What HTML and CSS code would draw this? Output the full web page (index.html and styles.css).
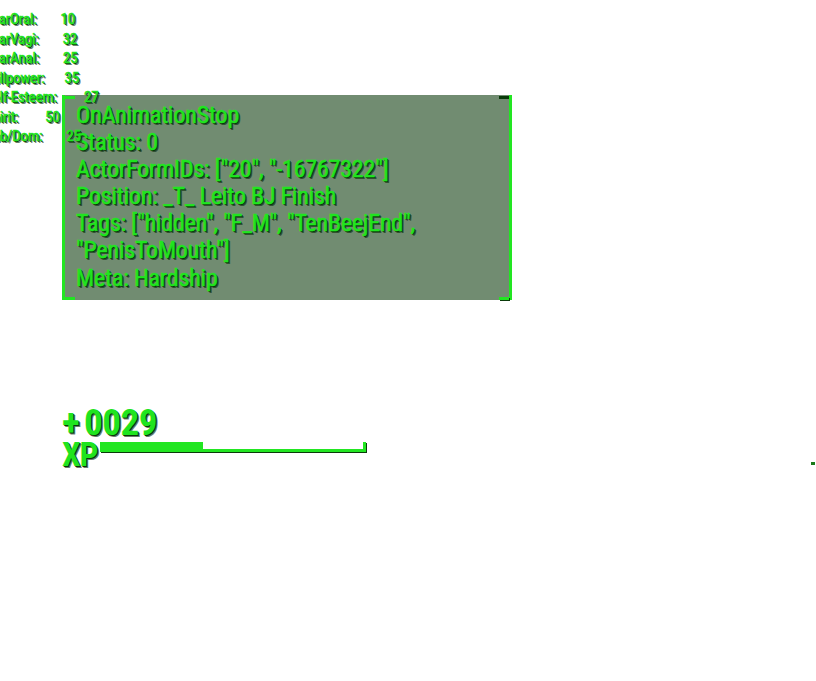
FILE: index.html
```html
<!DOCTYPE html>
<html>
<head>
<meta charset="utf-8">
<link rel="stylesheet" href="styles.css">
</head>
<body>
<div class="hud">
  <div class="event">
    <span class="tick tl"></span><span class="tick bl"></span>
    <span class="tick tr"></span><span class="tick br"></span>
    <div class="line">OnAnimationStop</div>
    <div class="line">Status: 0</div>
    <div class="line">ActorFormIDs: ["20", "-16767322"]</div>
    <div class="line">Position: _T_ Leito BJ Finish</div>
    <div class="line">Tags: ["hidden", "F_M", "TenBeejEnd",</div>
    <div class="line">"PenisToMouth"]</div>
    <div class="line">Meta: Hardship</div>
  </div>

  <div class="stats">
    <div class="row"><span class="lbl">FearOral:</span><span class="val">10</span></div>
    <div class="row"><span class="lbl">FearVagi:</span><span class="val">32</span></div>
    <div class="row"><span class="lbl">FearAnal:</span><span class="val">25</span></div>
    <div class="row narrow"><span class="lbl">Willpower:</span><span class="val">35</span></div>
    <div class="row wide"><span class="lbl">Self-Esteem:</span><span class="val">27</span></div>
    <div class="row wide"><span class="lbl">Spirit:</span><span class="val">50</span></div>
    <div class="row"><span class="lbl">Sub/Dom:</span><span class="val">25</span></div>
  </div>

  <div class="xp">
    <div class="gain"><span class="plus">+</span>0029</div>
    <div class="xprow">
      <span class="xplabel">XP</span>
      <div class="bar"><div class="fill" style="width:103px"></div></div>
    </div>
  </div>

  <span class="dot"></span>
</div>
</body>
</html>
```
FILE: styles.css
```css
html, body {
  margin: 0;
  padding: 0;
  background: #ffffff;
}
.hud {
  position: relative;
  width: 816px;
  height: 681px;
  overflow: hidden;
  font-family: "Roboto Condensed", "Liberation Sans Narrow", "DejaVu Sans Condensed", "Roboto", sans-serif;
  color: #1fe41f;
  text-shadow: 1px 1px 0 #0a360a, 2px 2px 0 rgba(8, 40, 8, 0.6);
}
.stats {
  position: absolute;
  left: -15px;
  top: 10px;
  font-size: 15px;
  font-weight: normal;
  letter-spacing: -0.2px;
  -webkit-text-stroke: 0.6px #1fe41f;
}
.stats .row {
  display: flex;
  gap: 24px;
  height: 19.5px;
  line-height: 19.5px;
}
.stats .row.narrow {
  gap: 20px;
}
.stats .row.wide {
  gap: 27px;
}
.event {
  position: absolute;
  left: 62px;
  top: 95px;
  width: 450px;
  height: 205px;
  box-sizing: border-box;
  padding: 7px 0 0 11px;
  background: #718c71;
  border-left: 3px solid #22e622;
  border-right: 3px solid #22e622;
  font-size: 24px;
  font-weight: normal;
  line-height: 27.1px;
  letter-spacing: -0.2px;
  -webkit-text-stroke: 0.5px #1fe41f;
}
.tick {
  position: absolute;
  width: 10px;
  height: 3px;
  background: #22e622;
}
.tick.tl { left: 0; top: 1px; }
.tick.bl { left: 0; bottom: 0; }
.tick.tr { right: 0; top: 1px; background: #0a3a0a; }
.tick.br { right: 0; bottom: 0; box-shadow: 1px 1px 0 #0a3a0a; }
.xp {
  position: absolute;
  left: 62px;
  top: 402px;
}
.gain {
  font-size: 37px;
  font-weight: bold;
  line-height: 42px;
  letter-spacing: -0.5px;
}
.plus {
  margin-right: 5px;
}
.xprow {
  display: flex;
  align-items: flex-start;
  margin-top: -4px;
}
.xplabel {
  font-size: 33px;
  font-weight: bold;
  line-height: 30px;
  letter-spacing: -1px;
}
.bar {
  position: relative;
  width: 266px;
  height: 10px;
  margin-left: 3px;
  margin-top: 2px;
  border-bottom: 3px solid #22e622;
  border-right: 3px solid #22e622;
  box-sizing: border-box;
  box-shadow: 1px 1px 0 #0a3a0a;
}
.fill {
  height: 7px;
  background: #22e622;
}
.dot {
  position: absolute;
  left: 811px;
  top: 462px;
  width: 4px;
  height: 3px;
  background: #1a7a1a;
}
```
